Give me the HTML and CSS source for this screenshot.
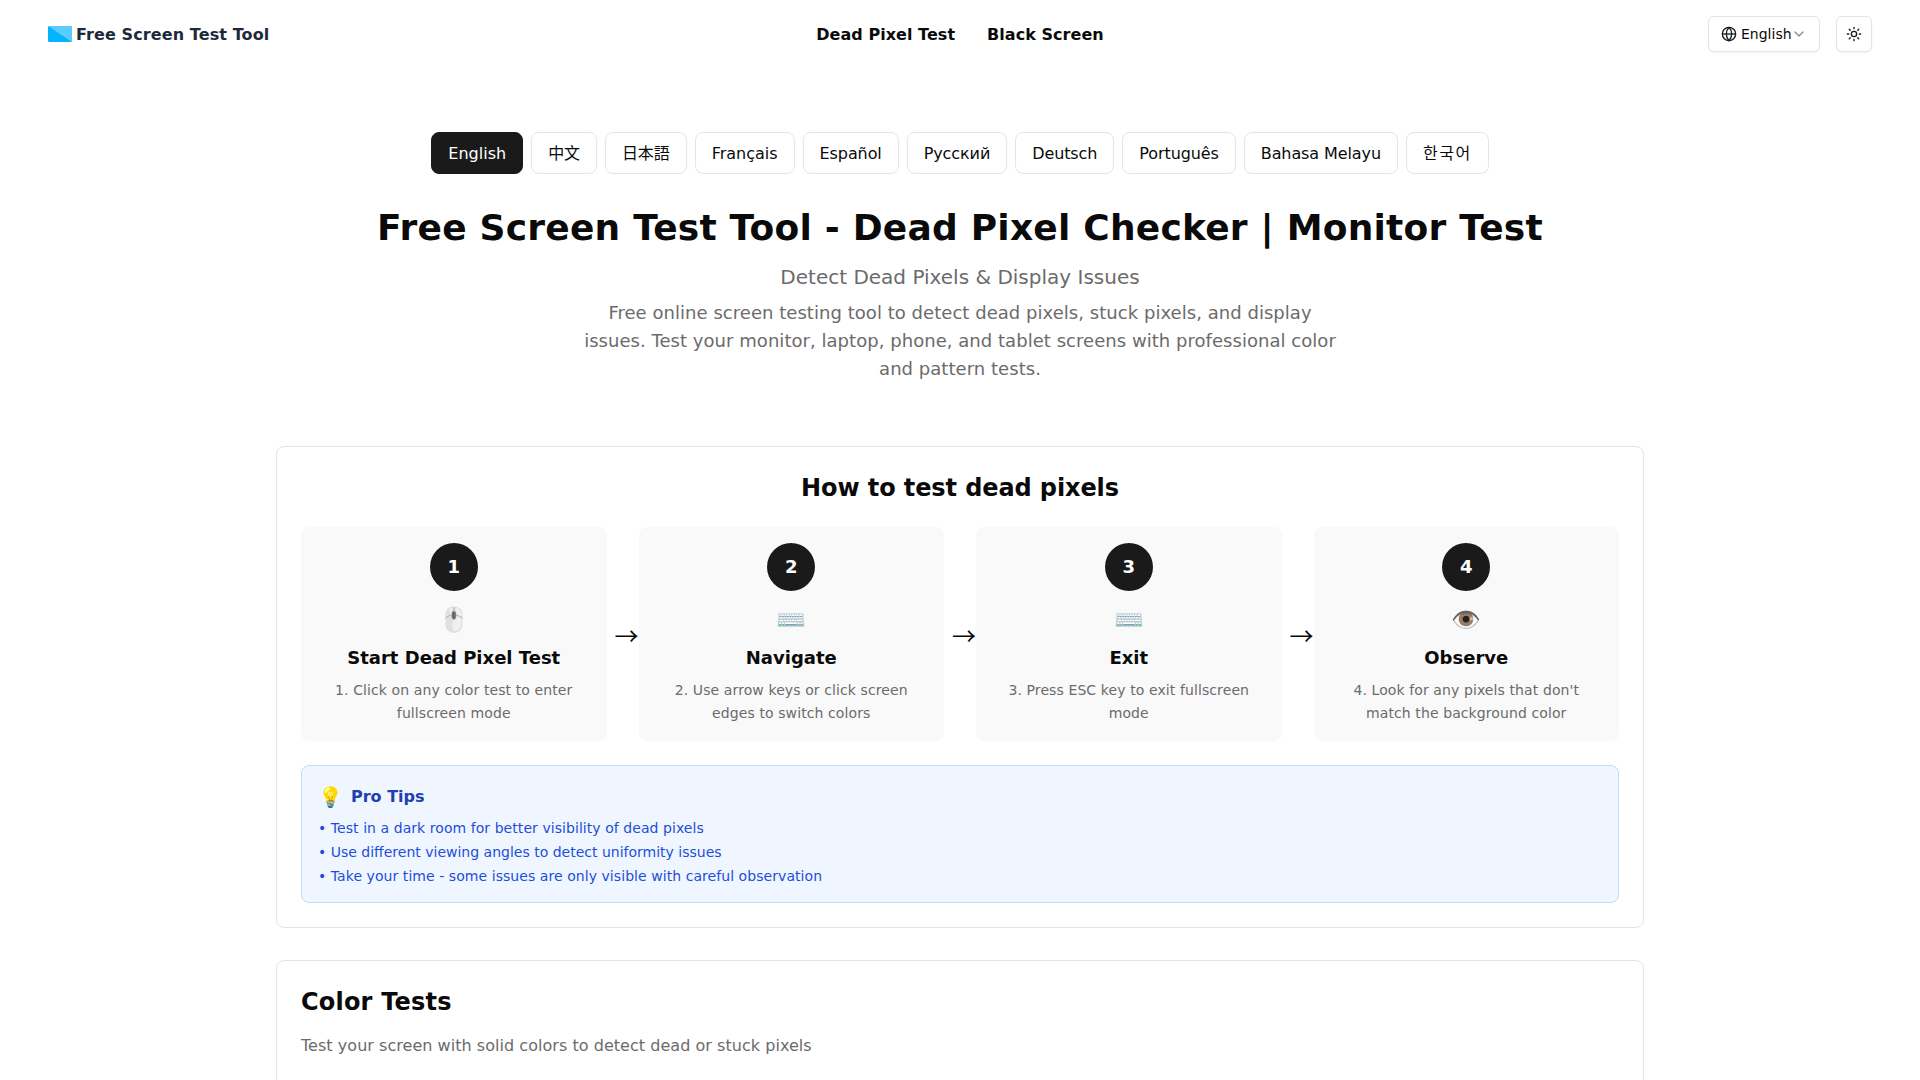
FILE: index.html
```html
<!DOCTYPE html>
<html lang="en">
<head>
<meta charset="utf-8">
<title>Free Screen Test Tool</title>
<link rel="stylesheet" href="styles.css">
</head>
<body>
<header class="nav">
  <a class="brand" href="#">
    <svg class="brand-icon" width="24" height="16" viewBox="0 0 24 16"><rect width="24" height="16" rx="1.5" fill="#00b4ff"/><path d="M0 0H22.5Q24 0 24 1.5V16Z" fill="#5ccbff"/></svg>
    <span class="brand-text">Free Screen Test Tool</span>
  </a>
  <nav class="nav-links"><a href="#">Dead Pixel Test</a><a href="#">Black Screen</a></nav>
  <div class="nav-actions">
    <button class="select">
      <svg width="16" height="16" viewBox="0 0 24 24" fill="none" stroke="#1a1a1a" stroke-width="2"><circle cx="12" cy="12" r="10"/><path d="M12 2a14.5 14.5 0 0 0 0 20 14.5 14.5 0 0 0 0-20"/><path d="M2 12h20"/></svg>
      <span>English</span>
      <svg class="chev" width="16" height="16" viewBox="0 0 24 24" fill="none" stroke="#8a8a8a" stroke-width="2" stroke-linecap="round" stroke-linejoin="round"><path d="m6 9 6 6 6-6"/></svg>
    </button>
    <button class="theme">
      <svg width="16" height="16" viewBox="0 0 24 24" fill="none" stroke="#1a1a1a" stroke-width="2" stroke-linecap="round"><circle cx="12" cy="12" r="4"/><path d="M12 2v2M12 20v2M4.93 4.93l1.41 1.41M17.66 17.66l1.41 1.41M2 12h2M20 12h2M6.34 17.66l-1.41 1.41M19.07 4.93l-1.41 1.41"/></svg>
    </button>
  </div>
</header>
<main class="main">
  <div class="langs">
    <a class="pill active" href="#">English</a>
    <a class="pill" href="#">中文</a>
    <a class="pill" href="#" lang="ja">日本語</a>
    <a class="pill pill-fr" href="#">Français</a>
    <a class="pill" href="#">Español</a>
    <a class="pill" href="#">Русский</a>
    <a class="pill" href="#">Deutsch</a>
    <a class="pill" href="#">Português</a>
    <a class="pill" href="#">Bahasa Melayu</a>
    <a class="pill pill-ko" href="#" lang="ko">한국어</a>
  </div>
  <h1>Free Screen Test Tool - Dead Pixel Checker | Monitor Test</h1>
  <p class="subtitle">Detect Dead Pixels &amp; Display Issues</p>
  <p class="intro">Free online screen testing tool to detect dead pixels, stuck pixels, and display issues. Test your monitor, laptop, phone, and tablet screens with professional color and pattern tests.</p>

  <section class="card how">
    <h2 class="how-title">How to test dead pixels</h2>
    <div class="steps">
      <div class="step"><div class="num">1</div><div class="emoji">🖱️</div><h3>Start Dead Pixel Test</h3><p>1. Click on any color test to enter fullscreen mode</p></div>
      <div class="arrow">→</div>
      <div class="step"><div class="num">2</div><div class="emoji">⌨️</div><h3>Navigate</h3><p>2. Use arrow keys or click screen edges to switch colors</p></div>
      <div class="arrow">→</div>
      <div class="step"><div class="num">3</div><div class="emoji">⌨️</div><h3>Exit</h3><p>3. Press ESC key to exit fullscreen mode</p></div>
      <div class="arrow">→</div>
      <div class="step"><div class="num">4</div><div class="emoji">👁️</div><h3>Observe</h3><p>4. Look for any pixels that don't match the background color</p></div>
    </div>
    <div class="tips">
      <div class="tips-head"><span class="tips-icon">💡</span><span>Pro Tips</span></div>
      <ul>
        <li>Test in a dark room for better visibility of dead pixels</li>
        <li class="tip-tight">Use different viewing angles to detect uniformity issues</li>
        <li>Take your time - some issues are only visible with careful observation</li>
      </ul>
    </div>
  </section>

  <section class="card colors">
    <h2>Color Tests</h2>
    <p>Test your screen with solid colors to detect dead or stuck pixels</p>
  </section>
</main>
</body>
</html>
```
FILE: styles.css
```css
* { box-sizing: border-box; }
html, body { margin: 0; padding: 0; height: 1080px; overflow: hidden; }
body { background: #fff; color: #0a0a0a; font-family: "DejaVu Sans", "Noto Sans CJK SC", sans-serif; font-size: 16px; line-height: 24px; }
a { color: inherit; text-decoration: none; }
h1, h2, h3, p, ul { margin: 0; padding: 0; }

.nav { display: grid; grid-template-columns: 1fr auto 1fr; align-items: center; height: 68px; padding: 0 48px; }
.brand { display: flex; align-items: center; gap: 4px; font-weight: 700; color: #1e293b; }
.brand-icon { display: block; }
.brand-text { padding-top: 2px; letter-spacing: .1px; }
.nav-links { display: flex; gap: 32px; font-weight: 700; letter-spacing: .04px; }
.nav-links a { padding-top: 2px; }
.nav-actions { display: flex; justify-content: flex-end; gap: 16px; }
.select, .theme { display: flex; align-items: center; height: 36px; background: #fff; border: 1px solid #e5e5e5; border-radius: 6px; box-shadow: 0 1px 2px rgba(0,0,0,.05); color: #0a0a0a; font: inherit; font-size: 14px; padding: 0; }
.select { width: 112px; gap: 4px; padding-left: 12px; }
.chev { margin-left: -5px; }
.theme { width: 36px; justify-content: center; }

.main { width: 1368px; margin: 0 auto; padding-top: 64px; }
.langs { display: flex; justify-content: center; gap: 8px; }
.pill { height: 42px; padding: 9px 16px 7px; border: 1px solid #e5e5e5; border-radius: 8px; background: #fff; letter-spacing: -.1px; }
.pill.active { background: #1a1a1a; border-color: #1a1a1a; color: #fff; letter-spacing: 0; }
.pill-fr { letter-spacing: 0; }
.pill-ko { letter-spacing: 1.5px; }
h1 { margin-top: 30px; text-align: center; font-size: 36px; line-height: 48px; font-weight: 700; letter-spacing: .22px; }
.subtitle { margin-top: 11px; text-align: center; font-size: 20px; line-height: 28px; color: #6b6b6b; }
.intro { width: 768px; margin: 8px auto 0; text-align: center; font-size: 18px; line-height: 28px; color: #6b6b6b; letter-spacing: .04px; }

.card { border: 1px solid #e5e5e5; border-radius: 8px; background: #fff; padding: 24px; }
.how { margin-top: 63px; height: 482px; }
.how-title { height: 32px; padding-top: 1px; text-align: center; font-size: 24px; line-height: 32px; font-weight: 700; letter-spacing: -.1px; }
.steps { display: flex; align-items: center; margin-top: 24px; }
.step { flex: 1 1 0; min-width: 0; height: 214px; padding: 16px; background: #f9f9f9; border-radius: 8px; text-align: center; }
.num { width: 48px; height: 48px; margin: 0 auto; display: flex; align-items: center; justify-content: center; border-radius: 50%; background: #1a1a1a; color: #fff; font-weight: 700; font-size: 18px; }
.emoji { margin-top: 11px; font-size: 24px; line-height: 36px; color: #000; }
h3 { margin-top: 6px; font-size: 18px; line-height: 28px; font-weight: 700; }
.step p { margin-top: 7px; font-size: 14px; line-height: 23px; color: #6b6b6b; letter-spacing: .1px; }
.arrow { width: 32px; padding: 2px 0 0 8px; font-family: "Noto Sans CJK SC", sans-serif; font-size: 24px; line-height: 32px; }

.tips { margin-top: 24px; height: 138px; padding: 17px 16px 16px; background: #eff6ff; border: 1px solid #bfdbfe; border-radius: 8px; }
.tips-head { display: flex; align-items: center; gap: 8px; font-weight: 700; color: #1e40af; line-height: 28px; }
.tips-icon { font-size: 20px; }
.tips ul { list-style: none; margin-top: 5px; font-size: 14px; line-height: 24px; color: #1d4ed8; letter-spacing: .06px; }
.tips li::before { content: "• "; }
.tips .tip-tight { letter-spacing: 0; }

.colors { margin-top: 32px; height: 300px; padding-top: 25px; }
.colors h2 { font-size: 24px; line-height: 32px; font-weight: 700; letter-spacing: .2px; }
.colors p { margin-top: 16px; color: #6b6b6b; letter-spacing: .04px; }
```
